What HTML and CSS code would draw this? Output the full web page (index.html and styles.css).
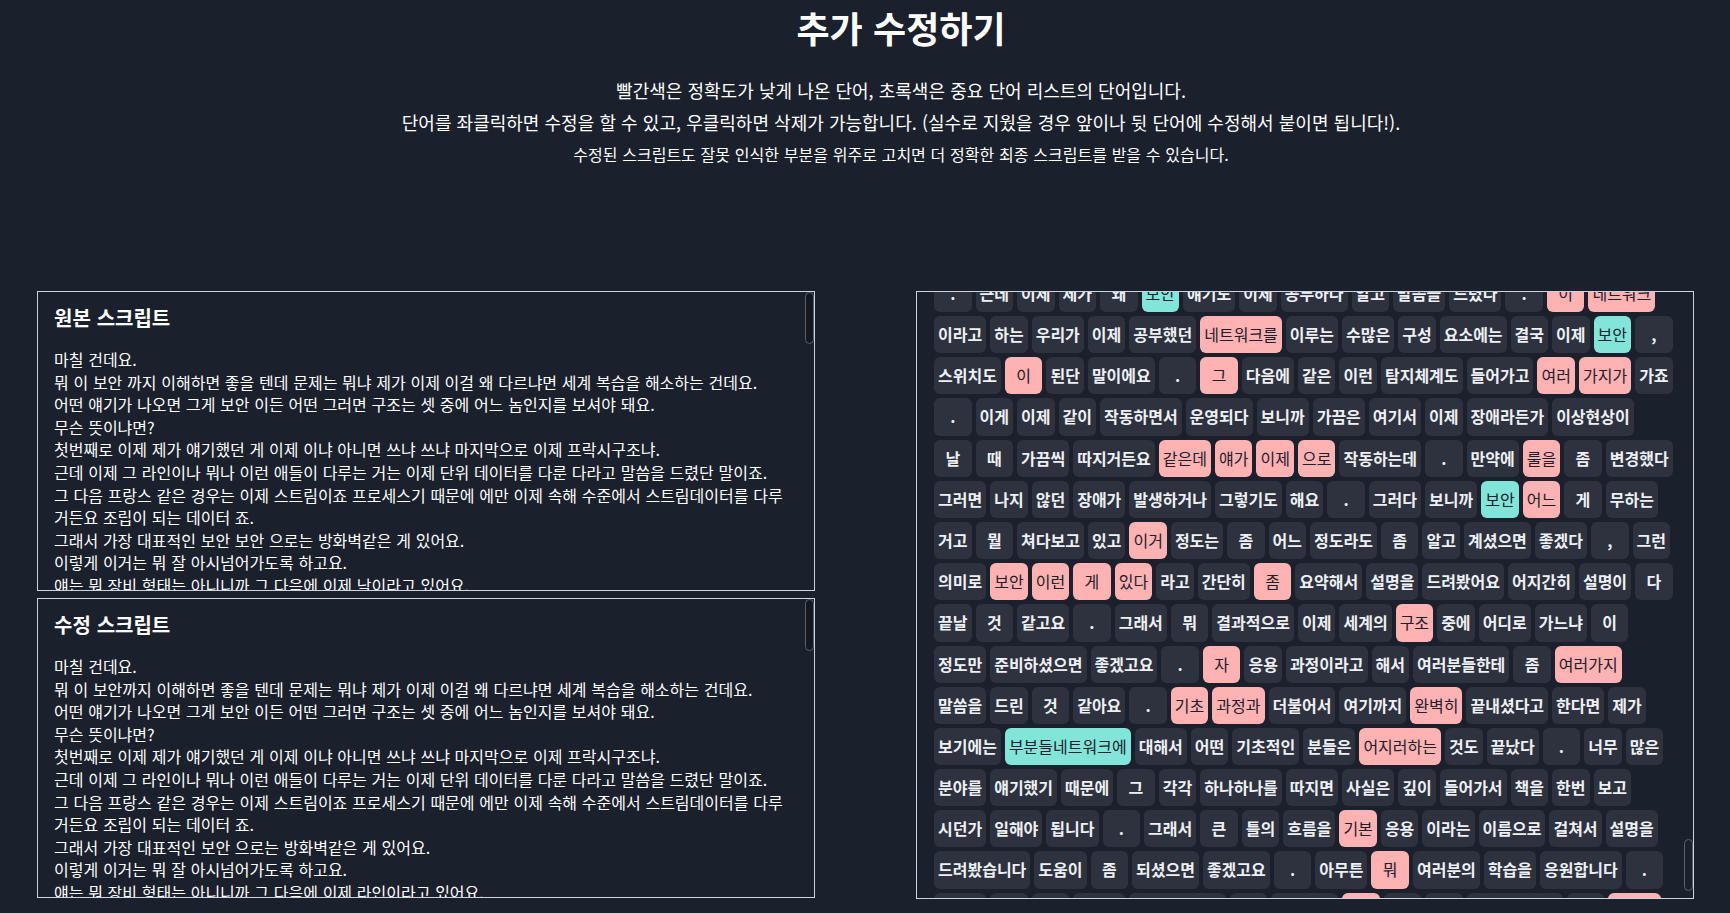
FILE: index.html
```html
<!DOCTYPE html>
<html lang="ko">
<head>
    <meta charset="UTF-8">
    <title>추가 수정하기</title>
    <link rel="stylesheet" href="styles.css">
</head>
<body>
    <header class="intro">
        <h1>추가 수정하기</h1>
        <p>빨간색은 정확도가 낮게 나온 단어, 초록색은 중요 단어 리스트의 단어입니다.</p>
        <p>단어를 좌클릭하면 수정을 할 수 있고, 우클릭하면 삭제가 가능합니다. (실수로 지웠을 경우 앞이나 뒷 단어에 수정해서 붙이면 됩니다!).</p>
        <p class="small">수정된 스크립트도 잘못 인식한 부분을 위주로 고치면 더 정확한 최종 스크립트를 받을 수 있습니다.</p>
    </header>
    <main class="columns">
        <div class="scripts">
            <section class="panel">
                <h2>원본 스크립트</h2>
                <p>마칠 건데요.<br>뭐 이 보안 까지 이해하면 좋을 텐데 문제는 뭐냐 제가 이제 이걸 왜 다르냐면 세계 복습을 해소하는 건데요.<br>어떤 얘기가 나오면 그게 보안 이든 어떤 그러면 구조는 셋 중에 어느 놈인지를 보셔야 돼요.<br>무슨 뜻이냐면?<br>첫번째로 이제 제가 얘기했던 게 이제 이냐 아니면 쓰냐 쓰냐 마지막으로 이제 프락시구조냐.<br>근데 이제 그 라인이나 뭐나 이런 애들이 다루는 거는 이제 단위 데이터를 다룬 다라고 말씀을 드렸단 말이죠.<br>그 다음 프랑스 같은 경우는 이제 스트림이죠 프로세스기 때문에 에만 이제 속해 수준에서 스트림데이터를 다루거든요 조립이 되는 데이터 죠.<br>그래서 가장 대표적인 보안 보안 으로는 방화벽같은 게 있어요.<br>이렇게 이거는 뭐 잘 아시넘어가도록 하고요.<br>얘는 뭐 장비 형태는 아니니까 그 다음에 이제 낙이라고 있어요.</p>
                <div class="thumb"></div>
            </section>
            <section class="panel">
                <h2>수정 스크립트</h2>
                <p>마칠 건데요.<br>뭐 이 보안까지 이해하면 좋을 텐데 문제는 뭐냐 제가 이제 이걸 왜 다르냐면 세계 복습을 해소하는 건데요.<br>어떤 얘기가 나오면 그게 보안 이든 어떤 그러면 구조는 셋 중에 어느 놈인지를 보셔야 돼요.<br>무슨 뜻이냐면?<br>첫번째로 이제 제가 얘기했던 게 이제 이냐 아니면 쓰냐 쓰냐 마지막으로 이제 프락시구조냐.<br>근데 이제 그 라인이나 뭐나 이런 애들이 다루는 거는 이제 단위 데이터를 다룬 다라고 말씀을 드렸단 말이죠.<br>그 다음 프랑스 같은 경우는 이제 스트림이죠 프로세스기 때문에 에만 이제 속해 수준에서 스트림데이터를 다루거든요 조립이 되는 데이터 죠.<br>그래서 가장 대표적인 보안 으로는 방화벽같은 게 있어요.<br>이렇게 이거는 뭐 잘 아시넘어가도록 하고요.<br>얘는 뭐 장비 형태는 아니니까 그 다음에 이제 라인이라고 있어요.</p>
                <div class="thumb"></div>
            </section>
        </div>
        <section class="panel words">
            <div class="word-list">
                <div class="word-row"><span class="word">.</span><span class="word">근데</span><span class="word">이제</span><span class="word">제가</span><span class="word">왜</span><span class="word key">보안</span><span class="word">얘기도</span><span class="word">이제</span><span class="word">공부하다</span><span class="word">알고</span><span class="word">말씀을</span><span class="word">드렸다</span><span class="word">.</span><span class="word low">이</span><span class="word low">네트워크</span></div>
                <div class="word-row"><span class="word">이라고</span><span class="word">하는</span><span class="word">우리가</span><span class="word">이제</span><span class="word">공부했던</span><span class="word low">네트워크를</span><span class="word">이루는</span><span class="word">수많은</span><span class="word">구성</span><span class="word">요소에는</span><span class="word">결국</span><span class="word">이제</span><span class="word key">보안</span><span class="word">,</span></div>
                <div class="word-row"><span class="word">스위치도</span><span class="word low">이</span><span class="word">된단</span><span class="word">말이에요</span><span class="word">.</span><span class="word low">그</span><span class="word">다음에</span><span class="word">같은</span><span class="word">이런</span><span class="word">탐지체계도</span><span class="word">들어가고</span><span class="word low">여러</span><span class="word low">가지가</span><span class="word">가죠</span></div>
                <div class="word-row"><span class="word">.</span><span class="word">이게</span><span class="word">이제</span><span class="word">같이</span><span class="word">작동하면서</span><span class="word">운영되다</span><span class="word">보니까</span><span class="word">가끔은</span><span class="word">여기서</span><span class="word">이제</span><span class="word">장애라든가</span><span class="word">이상현상이</span></div>
                <div class="word-row"><span class="word">날</span><span class="word">때</span><span class="word">가끔씩</span><span class="word">따지거든요</span><span class="word low">같은데</span><span class="word low">얘가</span><span class="word low">이제</span><span class="word low">으로</span><span class="word">작동하는데</span><span class="word">.</span><span class="word">만약에</span><span class="word low">룰을</span><span class="word">좀</span><span class="word">변경했다</span></div>
                <div class="word-row"><span class="word">그러면</span><span class="word">나지</span><span class="word">않던</span><span class="word">장애가</span><span class="word">발생하거나</span><span class="word">그렇기도</span><span class="word">해요</span><span class="word">.</span><span class="word">그러다</span><span class="word">보니까</span><span class="word key">보안</span><span class="word low">어느</span><span class="word">게</span><span class="word">무하는</span></div>
                <div class="word-row"><span class="word">거고</span><span class="word">뭘</span><span class="word">쳐다보고</span><span class="word">있고</span><span class="word low">이거</span><span class="word">정도는</span><span class="word">좀</span><span class="word">어느</span><span class="word">정도라도</span><span class="word">좀</span><span class="word">알고</span><span class="word">계셨으면</span><span class="word">좋겠다</span><span class="word">,</span><span class="word">그런</span></div>
                <div class="word-row"><span class="word">의미로</span><span class="word low">보안</span><span class="word low">이런</span><span class="word low">게</span><span class="word low">있다</span><span class="word">라고</span><span class="word">간단히</span><span class="word low">좀</span><span class="word">요약해서</span><span class="word">설명을</span><span class="word">드려봤어요</span><span class="word">어지간히</span><span class="word">설명이</span><span class="word">다</span></div>
                <div class="word-row"><span class="word">끝날</span><span class="word">것</span><span class="word">같고요</span><span class="word">.</span><span class="word">그래서</span><span class="word">뭐</span><span class="word">결과적으로</span><span class="word">이제</span><span class="word">세계의</span><span class="word low">구조</span><span class="word">중에</span><span class="word">어디로</span><span class="word">가느냐</span><span class="word">이</span></div>
                <div class="word-row"><span class="word">정도만</span><span class="word">준비하셨으면</span><span class="word">좋겠고요</span><span class="word">.</span><span class="word low">자</span><span class="word">응용</span><span class="word">과정이라고</span><span class="word">해서</span><span class="word">여러분들한테</span><span class="word">좀</span><span class="word low">여러가지</span></div>
                <div class="word-row"><span class="word">말씀을</span><span class="word">드린</span><span class="word">것</span><span class="word">같아요</span><span class="word">.</span><span class="word low">기초</span><span class="word low">과정과</span><span class="word">더불어서</span><span class="word">여기까지</span><span class="word low">완벽히</span><span class="word">끝내셨다고</span><span class="word">한다면</span><span class="word">제가</span></div>
                <div class="word-row"><span class="word">보기에는</span><span class="word key">부분들네트워크에</span><span class="word">대해서</span><span class="word">어떤</span><span class="word">기초적인</span><span class="word">분들은</span><span class="word low">어지러하는</span><span class="word">것도</span><span class="word">끝났다</span><span class="word">.</span><span class="word">너무</span><span class="word">많은</span></div>
                <div class="word-row"><span class="word">분야를</span><span class="word">얘기했기</span><span class="word">때문에</span><span class="word">그</span><span class="word">각각</span><span class="word">하나하나를</span><span class="word">따지면</span><span class="word">사실은</span><span class="word">깊이</span><span class="word">들어가서</span><span class="word">책을</span><span class="word">한번</span><span class="word">보고</span></div>
                <div class="word-row"><span class="word">시던가</span><span class="word">일해야</span><span class="word">됩니다</span><span class="word">.</span><span class="word">그래서</span><span class="word">큰</span><span class="word">틀의</span><span class="word">흐름을</span><span class="word low">기본</span><span class="word">응용</span><span class="word">이라는</span><span class="word">이름으로</span><span class="word">걸쳐서</span><span class="word">설명을</span></div>
                <div class="word-row"><span class="word">드려봤습니다</span><span class="word">도움이</span><span class="word">좀</span><span class="word">되셨으면</span><span class="word">좋겠고요</span><span class="word">.</span><span class="word">아무튼</span><span class="word low">뭐</span><span class="word">여러분의</span><span class="word">학습을</span><span class="word">응원합니다</span><span class="word">.</span></div>
                <!-- next row is cut off by the panel, only the chip tops show -->
                <div class="word-row"><span class="word w3"></span><span class="word"></span><span class="word"></span><span class="word w3"></span><span class="word w6"></span><span class="word"></span><span class="word w4"></span><span class="word low"></span><span class="word"></span><span class="word"></span><span class="word w6"></span><span class="word"></span><span class="word low w3"></span></div>
            </div>
            <div class="thumb thumb-low"></div>
        </section>
    </main>
</body>
</html>
```

FILE: styles.css
```css
html, body {
    margin: 0;
    height: 913px;
    overflow: hidden;
    background: #1a202c;
    color: #fff;
    font-family: "Noto Sans CJK KR", "Noto Sans", sans-serif;
    word-spacing: 0.25px;
}
.intro {
    height: 291px;
    padding-left: 72px;
    box-sizing: border-box;
    text-align: center;
}
.intro h1 {
    margin: 0 0 25px;
    padding-top: 5px;
    font-size: 36px;
    line-height: 44px;
    font-weight: 700;
}
.intro p {
    margin: 0;
    font-size: 18px;
    line-height: 32px;
    word-spacing: 0.12px;
}
.intro .small {
    font-size: 16px;
    word-spacing: 0.3px;
}
.columns {
    display: flex;
    justify-content: space-between;
    padding: 0 36px 0 37px;
}
.scripts {
    display: flex;
    flex-direction: column;
    gap: 7px;
}
.panel {
    position: relative;
    box-sizing: border-box;
    width: 778px;
    height: 300px;
    border: 1px solid #cbd5e0;
    padding: 0 26px 0 16px;
    overflow: hidden;
}
.panel h2 {
    margin: 0;
    padding-top: 11px;
    font-size: 20px;
    line-height: 30px;
    font-weight: 700;
}
.panel p {
    margin: 15px 0 0;
    font-size: 16px;
    line-height: 22.6px;
}
.words {
    height: 608px;
    padding: 0 0 0 15px;
}
.word-list {
    margin-top: -19.2px;
}
.word-row {
    display: flex;
}
.word {
    box-sizing: border-box;
    min-width: 37.5px;
    height: 37.2px;
    margin: 2px;
    padding: 0 4px;
    border-radius: 6px;
    background: #2d323e;
    color: #edf0f4;
    font-size: 16px;
    font-weight: 700;
    line-height: 37px;
    text-align: center;
}
.word.low {
    background: #feb2b2;
    color: #1a202c;
    font-weight: 400;
}
.word.key {
    background: #81e6d9;
    color: #1a202c;
    font-weight: 400;
}
.word.w3 {
    min-width: 52.2px;
}
.word.w4 {
    min-width: 67px;
}
.word.w6 {
    min-width: 96.3px;
}
.thumb {
    position: absolute;
    top: 0;
    right: 0;
    width: 9px;
    height: 52px;
    box-sizing: border-box;
    border: 1px solid #5a606c;
    border-radius: 5px;
    background: #14181f;
}
.thumb-low {
    top: 547px;
    background: none;
}
```
